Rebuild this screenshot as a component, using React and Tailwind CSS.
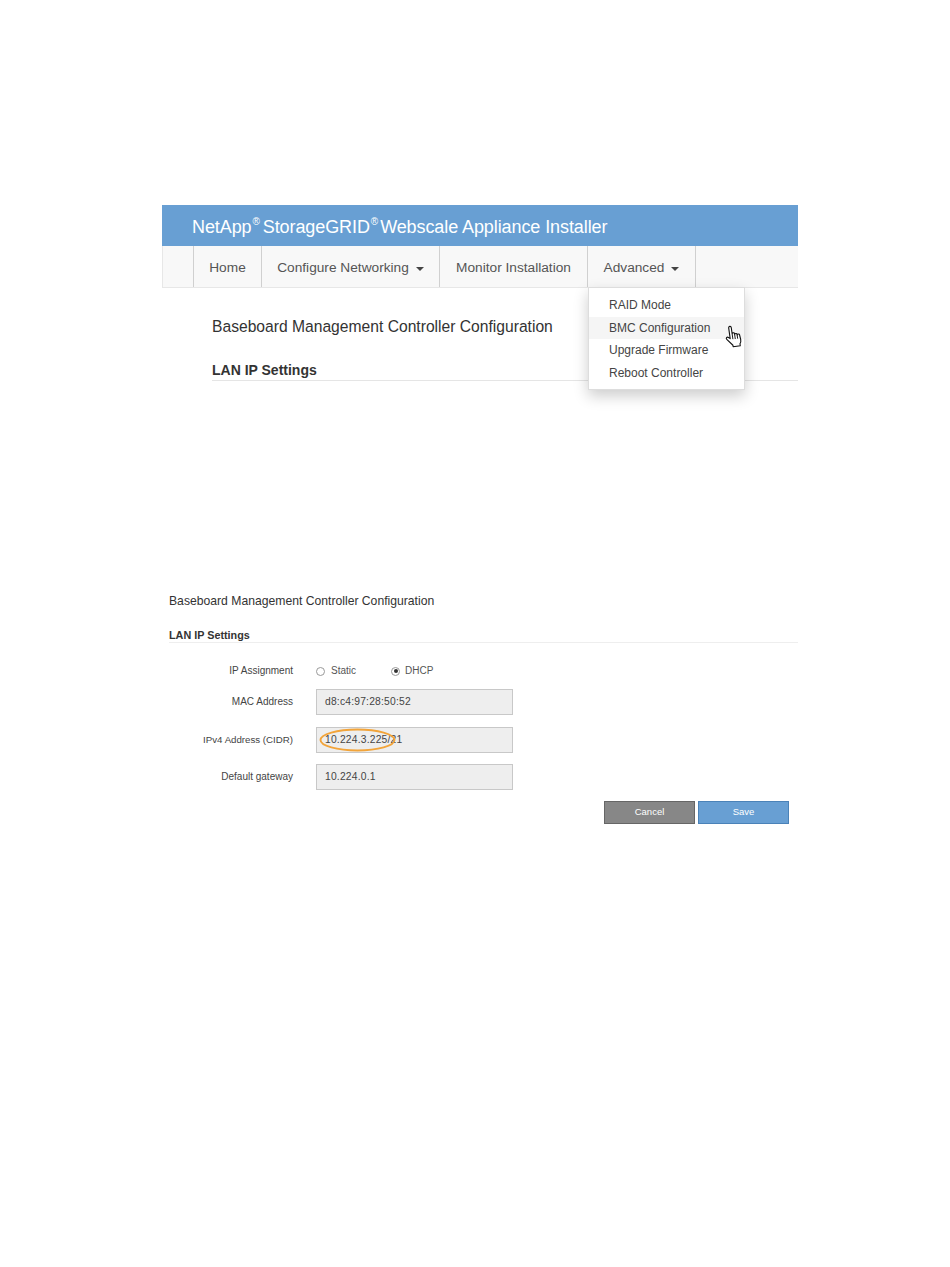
const arial = { fontFamily: '"Liberation Sans", Arial, sans-serif' };

function Caret() {
  return <span className="inline-block ml-[7px] align-middle w-0 h-0 border-x-[4px] border-x-transparent border-t-[4px] border-t-[#444]" />;
}

function NavItem({ children, w, caret }) {
  return (
    <div className={`${w} h-full flex items-center justify-center pt-[4px] border-r border-[#d0d0d0] text-[13.7px] text-[#555]`}>
      <span>{children}</span>
      {caret && <Caret />}
    </div>
  );
}

function Hand() {
  return (
    <svg width="18" height="23" viewBox="0 0 18 23" className="absolute left-[136px] top-[8px]">
      <g transform="rotate(-8 9 12)">
        <path
          d="M5 2.2c0-1.7 2.6-1.7 2.6 0v6.6c0-1.4 2.4-1.4 2.4 0v1c0-1.4 2.4-1.4 2.4 0v.8c0-1.3 2.4-1.3 2.4.2l.5 4.6c.1 1.6-.4 3-1.3 4.1v2H6.8v-1.5L1.5 13.4c-1-1.3.6-2.8 1.9-1.7L5 13.1z"
          fill="#fff"
          stroke="#111"
          strokeWidth="1.1"
          strokeLinejoin="round"
        />
        <path d="M7.6 9v5M10 9.8v4.4M12.4 10.6v3.6" stroke="#111" strokeWidth="0.9" fill="none" />
      </g>
    </svg>
  );
}

function Row({ label, value, mt, labelSize, children }) {
  return (
    <div className={`flex items-center ${mt}`}>
      <div className={`w-[124px] text-right ${labelSize} leading-none text-[#444]`}>{label}</div>
      <div className="relative ml-[23px] w-[197px] h-[26px] flex items-center pl-[8px] bg-[#eeeeee] border border-[#c8c8c8] text-[10.3px] tracking-[0.2px] text-[#444]">
        {value}
        {children}
      </div>
    </div>
  );
}

function Radio({ checked }) {
  return (
    <span className="w-[9px] h-[9px] rounded-full border border-[#999] bg-white flex items-center justify-center">
      {checked && <span className="w-[4px] h-[4px] rounded-full bg-[#333]" />}
    </span>
  );
}

export default function App() {
  return (
    <div className="w-[950px] h-[1267px] bg-white pt-[205px] pl-[162px]" style={arial}>
      <div className="w-[636px]">
        <div className="h-[41px] bg-[#689fd3] flex items-center pl-[30px] pt-[3px] text-[18px] text-white tracking-[-0.09px]">
          <span>NetApp</span>
          <sup className="text-[10px] mx-[1px] top-[-5px]">®</sup>
          <span className="ml-[2px]">StorageGRID</span>
          <sup className="text-[10px] mx-[1px] top-[-5px]">®</sup>
          <span className="ml-[1px]">Webscale Appliance Installer</span>
        </div>

        <div className="relative h-[42px] bg-[#f8f8f8] border-b border-l border-[#e7e7e7] pl-[30px]">
          <div className="flex h-full border-l border-[#d0d0d0] w-fit">
            <NavItem w="w-[68px]">Home</NavItem>
            <NavItem w="w-[178px]" caret>Configure Networking</NavItem>
            <NavItem w="w-[148px]">Monitor Installation</NavItem>
            <NavItem w="w-[108px]" caret>Advanced</NavItem>
          </div>
          <div className="absolute z-10 left-[425px] top-[41px] w-[157px] h-[103px] bg-white border border-[#dddddd] shadow-[0_6px_14px_rgba(0,0,0,0.2)] pt-[6px] text-[12px] text-[#444]">
            <div className="h-[22px] flex items-center pl-[20px]">RAID Mode</div>
            <div className="relative h-[22px] mt-[1px] flex items-center pl-[20px] bg-[#f5f5f5]">
              BMC Configuration
              <Hand />
            </div>
            <div className="h-[22px] flex items-center pl-[20px]">Upgrade Firmware</div>
            <div className="h-[22px] mt-[1px] flex items-center pl-[20px]">Reboot Controller</div>
          </div>
        </div>

        <div className="ml-[50px]">
          <h1 className="mt-[29px] text-[15.65px] leading-[20px] text-[#333]">Baseboard Management Controller Configuration</h1>
          <h2 className="mt-[25px] text-[14px] leading-[16px] font-bold text-[#333] pb-[2px] border-b border-[#e5e5e5]">LAN IP Settings</h2>
        </div>

        <div className="ml-[7px] mt-[212px]">
          <h1 className="text-[12.18px] leading-[16px] text-[#333]">Baseboard Management Controller Configuration</h1>
          <h2 className="mt-[20px] text-[10.8px] leading-[12px] font-bold text-[#333] pb-[1px] border-b border-[#eeeeee]">LAN IP Settings</h2>

          <div className="flex items-center mt-[21px] h-[14px]">
            <div className="w-[124px] text-right text-[10px] leading-none text-[#444]">IP Assignment</div>
            <div className="ml-[23px] flex items-center gap-[6px] text-[10px] leading-none text-[#555]">
              <Radio />
              <span className="w-[54px]">Static</span>
              <Radio checked />
              <span className="-ml-[1px]">DHCP</span>
            </div>
          </div>

          <Row label="MAC Address" labelSize="text-[10px]" value="d8:c4:97:28:50:52" mt="mt-[11px]" />
          <Row label="IPv4 Address (CIDR)" labelSize="text-[9.7px]" value="10.224.3.225/21" mt="mt-[12px]">
            <svg width="77" height="24" viewBox="0 0 77 24" className="absolute left-[2px] top-0">
              <ellipse cx="38.5" cy="12" rx="37" ry="10.5" fill="none" stroke="#f2a43a" strokeWidth="1.9" />
            </svg>
          </Row>
          <Row label="Default gateway" labelSize="text-[10px]" value="10.224.0.1" mt="mt-[11px]" />

          <div className="flex mt-[11px] ml-[435px] gap-[3px] text-[9.5px] text-white">
            <div className="w-[91px] h-[23px] flex items-center justify-center bg-[#878787] border border-[#666666]">Cancel</div>
            <div className="w-[91px] h-[23px] flex items-center justify-center bg-[#689fd3] border border-[#4a82b8]">Save</div>
          </div>
        </div>
      </div>
    </div>
  );
}
